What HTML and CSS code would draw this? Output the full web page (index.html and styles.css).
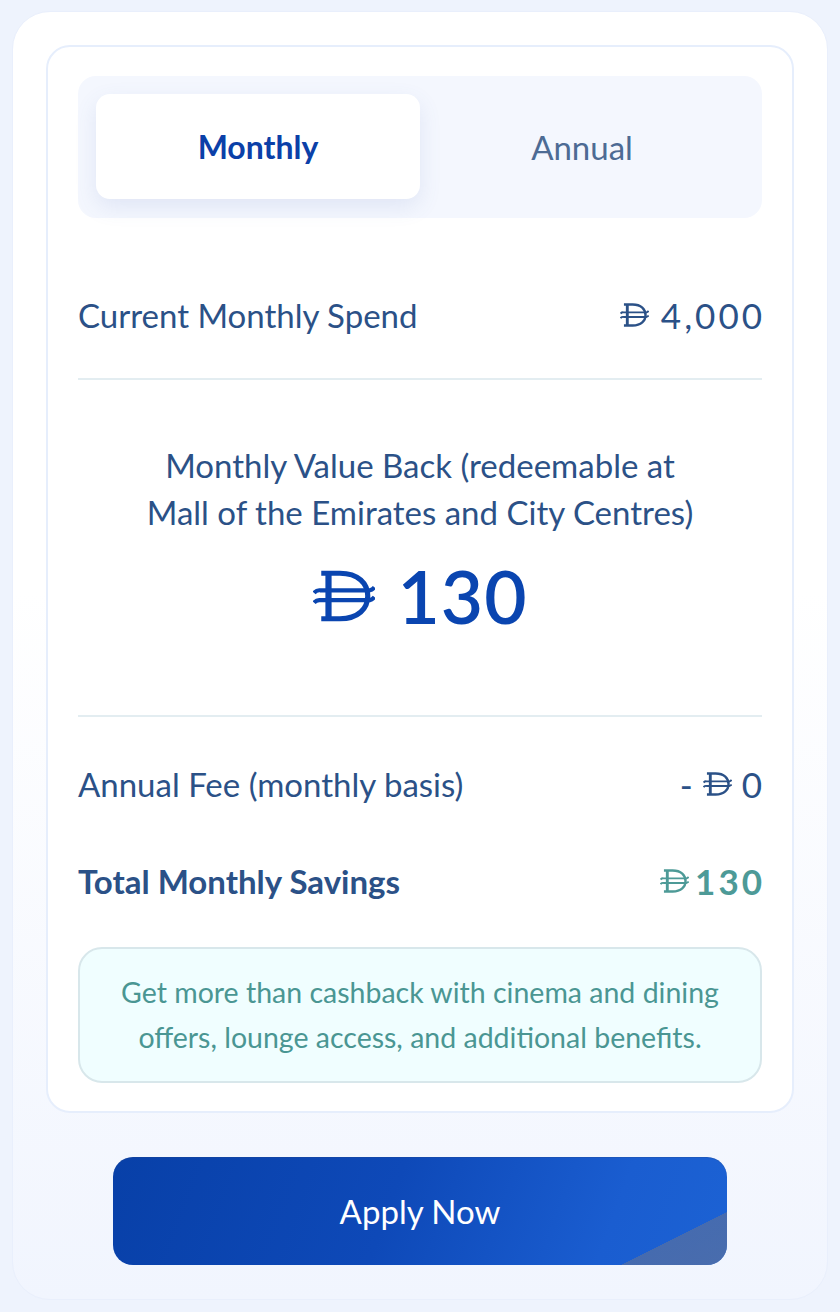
FILE: index.html
```html
<!DOCTYPE html>
<html lang="en">
<head>
<meta charset="utf-8">
<title>Savings Calculator</title>
<link rel="stylesheet" href="styles.css">
</head>
<body>
<svg width="0" height="0" class="defs" aria-hidden="true">
  <defs>
    <symbol id="aed" viewBox="0 0 120 100">
      <path d="M30 6 V94" fill="none" stroke="currentColor" stroke-width="12"/>
      <path d="M16 6 H52 C88 6 106 26 106 50 C106 74 88 94 52 94 H16" fill="none" stroke="currentColor" stroke-width="10"/>
      <path d="M2 44 Q7 38 14 39 H110 Q115 38 119 33" fill="none" stroke="currentColor" stroke-width="8"/>
      <path d="M2 63 Q7 57 14 58 H110 Q115 57 119 52" fill="none" stroke="currentColor" stroke-width="8"/>
    </symbol>
  </defs>
</svg>
<div class="outer">
  <div class="card">
    <div class="toggle">
      <div class="tab active">Monthly</div>
      <div class="tab">Annual</div>
    </div>

    <div class="row spend">
      <span class="label">Current Monthly Spend</span>
      <span class="amount"><svg class="aed aed-sm"><use href="#aed"/></svg><span class="num">4,000</span></span>
    </div>

    <div class="value">
      <p class="value-title">Monthly Value Back (redeemable at<br>Mall of the Emirates and City Centres)</p>
      <div class="big"><svg class="aed aed-lg"><use href="#aed"/></svg><span class="num">130</span></div>
    </div>

    <div class="summary">
      <div class="row">
        <span class="label">Annual Fee (monthly basis)</span>
        <span class="amount"><span class="minus">-</span><svg class="aed aed-sm"><use href="#aed"/></svg><span class="num">0</span></span>
      </div>
      <div class="row total">
        <span class="label">Total Monthly Savings</span>
        <span class="amount teal"><svg class="aed aed-sm"><use href="#aed"/></svg><span class="num">130</span></span>
      </div>
    </div>

    <div class="info">Get more than cashback with cinema and dining<br>offers, lounge access, and additional benefits.</div>
  </div>

  <button class="apply" type="button">Apply Now</button>
</div>
</body>
</html>
```

FILE: styles.css
```css
* { box-sizing: border-box; }

html, body {
  margin: 0;
  padding: 0;
}

body {
  width: 840px;
  height: 1312px;
  background: #eef3fd;
  font-family: Lato, "Noto Sans", sans-serif;
  padding: 11px 12px 12px 12px;
}

.defs {
  position: absolute;
  width: 0;
  height: 0;
}

.outer {
  width: 816px;
  height: 1289px;
  border-radius: 38px;
  background: linear-gradient(180deg, #ffffff 0%, #ffffff 45%, #f1f5fe 100%);
  border: 1px solid #e9effc;
  padding: 33px 33px 34px 33px;
  display: flex;
  flex-direction: column;
  align-items: center;
}

.card {
  width: 748px;
  background: #ffffff;
  border: 2px solid #e6eefc;
  border-radius: 24px;
  padding: 29px 30px 28px 30px;
}

.toggle {
  display: grid;
  grid-template-columns: 1fr 1fr;
  padding: 18px 18px 19px 18px;
  background: #f4f7fe;
  border-radius: 18px;
}

.tab {
  height: 105px;
  display: flex;
  align-items: center;
  justify-content: center;
  font-size: 33px;
  color: #4d6b94;
  border-radius: 14px;
}

.tab.active {
  background: #ffffff;
  color: #0b40a8;
  font-weight: 700;
  font-size: 32px;
  box-shadow: 0 8px 22px rgba(80, 110, 180, 0.12);
}

.row {
  display: flex;
  justify-content: space-between;
  align-items: center;
  height: 50px;
  font-size: 33px;
  color: #2b5187;
}

.spend {
  margin-top: 72px;
  height: 50px;
  box-sizing: content-box;
  padding-bottom: 38px;
  border-bottom: 2px solid #e3edf1;
}

.amount {
  display: flex;
  align-items: center;
  font-size: 35px;
}

.num {
  letter-spacing: 3px;
  margin-right: -3px;
}

.aed {
  display: inline-block;
  fill: none;
  color: inherit;
}

.aed-sm {
  width: 29px;
  height: 24px;
  margin-right: 10px;
}

.spend .aed-sm { margin-right: 12px; }

.minus {
  margin-right: 10px;
}

.value {
  text-align: center;
  padding: 62px 0 79px 0;
  border-bottom: 2px solid #e3edf1;
}

.value-title {
  margin: 0;
  font-size: 33px;
  line-height: 47px;
  color: #2b5187;
}

.big {
  margin-top: 20px;
  height: 80px;
  display: flex;
  align-items: center;
  justify-content: center;
  font-size: 73px;
  color: #0a45b0;
  font-weight: 600;
}

.big .num {
  letter-spacing: 1px;
  margin-right: -1px;
}

.aed-lg {
  width: 62px;
  height: 52px;
  margin-right: 22px;
}

.summary {
  padding-top: 42px;
  display: flex;
  flex-direction: column;
  gap: 47px;
}

.total .label {
  font-weight: 700;
}

.total .amount {
  font-weight: 700;
}

.total .aed-sm {
  margin-right: 6px;
}

.teal {
  color: #4d9a97;
}

.info {
  margin-top: 41px;
  background: #f0feff;
  border: 2px solid #d8e7eb;
  border-radius: 24px;
  padding: 21px 10px;
  text-align: center;
  font-size: 28.5px;
  line-height: 45px;
  color: #4a9693;
}

.apply {
  position: relative;
  overflow: hidden;
  margin-top: 44px;
  width: 614px;
  height: 109px;
  border: none;
  border-radius: 20px;
  background: linear-gradient(110deg, #0840a8 0%, #0e49b8 45%, #1a5dd0 80%, #1c62d4 100%);
  color: #ffffff;
  font-family: Lato, "Noto Sans", sans-serif;
  font-size: 33px;
  box-shadow: 0 1px 0 rgba(40, 70, 130, 0.25) inset;
}

.apply::after {
  content: "";
  position: absolute;
  right: 0;
  bottom: 0;
  width: 106px;
  height: 53px;
  background: linear-gradient(to top left, rgba(88, 112, 160, 0.75) 0%, rgba(88, 112, 160, 0.7) 50%, transparent 50%);
}
```
